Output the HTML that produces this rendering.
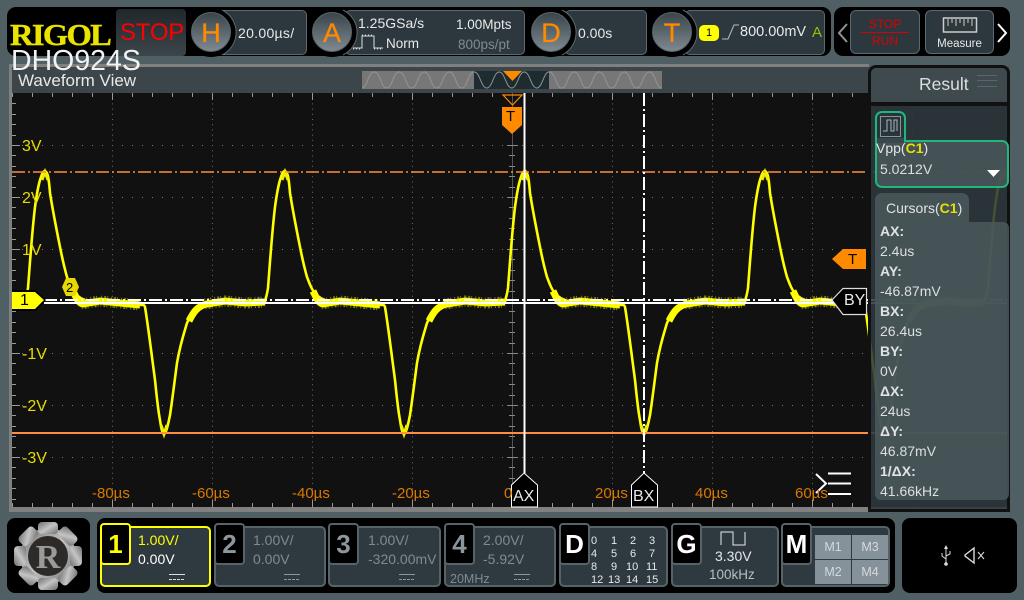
<!DOCTYPE html>
<html><head><meta charset="utf-8"><style>
html,body{margin:0;padding:0;background:#4f5f64;}
#r{position:relative;width:1024px;height:600px;overflow:hidden;background:#4f5f64;font-family:"Liberation Sans",sans-serif;color:#e8e8e8;}
#r div{position:absolute;box-sizing:border-box;white-space:nowrap;}
.bk{background:#000;}
.box{background:#2c383e;border:1px solid #5b6a70;border-radius:5px;}
.ring{background:#000;border-radius:50%;width:50px;height:50px;top:7px;}
.cir{border-radius:50%;width:40px;height:40px;top:12px;background:linear-gradient(#3a454b,#7e8a90);color:#ff8a00;font-size:27px;text-align:center;line-height:40px;border:1px solid #59666c;-webkit-text-stroke:.3px #ff8a00;}
.t{line-height:1;}
.ch{background:#2e3a40;border:2px solid #56646a;border-radius:5px;height:61px;top:526px;}
.tab{background:#000;border:2px solid #56646a;border-radius:4px;width:31px;height:42px;top:523px;font-weight:bold;font-size:26px;text-align:center;line-height:38px;color:#8b979c;}
.g{color:#7f8b90;}
.gl{background:#86929a;color:#d5d9db;font-size:12.5px;text-align:center;line-height:24px;width:36px;height:24px;}
.d{font-size:11px;color:#e8e8e8;line-height:1;}
.lab{font-size:14px;font-weight:bold;color:#e0e3e4;left:880px;line-height:1;}
.val{font-size:14px;color:#dcdfe0;left:880px;line-height:1;}
</style></head><body><div id="r">

<!-- top bars -->
<div class="bk" style="left:7px;top:7px;width:824px;height:49px;border-radius:9px;"></div>
<div class="bk" style="left:834px;top:7px;width:176px;height:49px;border-radius:9px;"></div>
<div class="t" style="left:10px;top:19px;color:#eae300;font-family:'Liberation Serif',serif;font-weight:bold;font-size:31px;transform:scaleX(1.05);transform-origin:left;letter-spacing:-1.6px;-webkit-text-stroke:.4px #eae300;">RIGOL</div>
<div style="left:116px;top:9px;width:70px;height:47px;background:linear-gradient(#20272b,#3b464b);border-radius:4px;"></div>
<div class="t" style="left:120px;top:21px;color:#f00;font-size:24px;letter-spacing:-.2px;">STOP</div>

<div class="box" style="left:218px;top:10px;width:89px;height:45px;"></div>
<div class="ring" style="left:186px;"></div>
<div class="cir" style="left:191px;">H</div>
<div class="t" style="left:238px;top:26px;font-size:14px;letter-spacing:.3px;">20.00µs/</div>

<div class="box" style="left:345px;top:10px;width:180px;height:45px;"></div>
<div class="ring" style="left:307px;"></div>
<div class="cir" style="left:312px;">A</div>
<div class="t" style="left:358px;top:16px;font-size:14px;">1.25GSa/s</div>
<div class="t" style="left:456px;top:18px;font-size:13.5px;">1.00Mpts</div>
<div class="t" style="left:458px;top:38px;font-size:13.5px;color:#7f8b90;">800ps/pt</div>
<div class="t" style="left:386px;top:37px;font-size:13.5px;">Norm</div>
<svg style="position:absolute;left:352px;top:33px" width="32" height="18"><path d="M1 15H10V3H22V15H31" fill="none" stroke="#ddd" stroke-width="1"/><path d="M1 16H10M22 16H31M10 2H22" stroke="#ddd" stroke-width="1" stroke-dasharray="1 2" fill="none"/></svg>

<div class="box" style="left:565px;top:10px;width:82px;height:45px;"></div>
<div class="ring" style="left:526px;"></div>
<div class="cir" style="left:531px;">D</div>
<div class="t" style="left:578px;top:26px;font-size:14px;">0.00s</div>

<div class="box" style="left:685px;top:10px;width:140px;height:45px;"></div>
<div class="ring" style="left:647px;"></div>
<div class="cir" style="left:652px;">T</div>
<svg style="position:absolute;left:0;top:0" width="1024" height="60"><g fill="none" stroke="#5b6a70"><path d="M222 10A25 25 0 0 1 222 55"/><path d="M343 10A25 25 0 0 1 343 55"/><path d="M562 10A25 25 0 0 1 562 55"/><path d="M683 10A25 25 0 0 1 683 55"/></g></svg>
<div style="left:699px;top:25px;width:20px;height:16px;background:#ff0;border-radius:5px;color:#000;font-size:11px;text-align:center;line-height:16px;">1</div>
<svg style="position:absolute;left:720px;top:23px" width="20" height="18"><path d="M2 16H8L14 2H19" fill="none" stroke="#bbb" stroke-width="1"/></svg>
<div class="t" style="left:740px;top:25px;font-size:14.5px;">800.00mV</div>
<div class="t" style="left:812px;top:25px;font-size:15px;color:#8fc400;">A</div>

<svg style="position:absolute;left:836px;top:20px" width="14" height="24"><path d="M11 4L3 13L11 22" fill="none" stroke="#8a9499" stroke-width="2"/></svg>
<div class="box" style="left:850px;top:10px;width:70px;height:44px;border-radius:6px;"></div>
<div class="t" style="left:850px;top:18px;width:70px;text-align:center;font-size:12px;color:#d00;">STOP</div>
<div style="left:861px;top:32px;width:48px;height:1px;background:#d00;"></div>
<div class="t" style="left:850px;top:35px;width:70px;text-align:center;font-size:12px;color:#d00;">RUN</div>
<div class="box" style="left:925px;top:10px;width:69px;height:44px;border-radius:6px;"></div>
<svg style="position:absolute;left:942px;top:16px" width="36" height="18"><rect x="1.5" y="2" width="33" height="14" fill="none" stroke="#ccc" stroke-width="1.5"/><path d="M6 3V10M10 3V7M14 3V10M18 3V7M22 3V10M26 3V7M30 3V10" stroke="#ccc" stroke-width="1"/></svg>
<div class="t" style="left:925px;top:39px;width:69px;text-align:center;font-size:11.5px;">Measure</div>
<svg style="position:absolute;left:995px;top:20px" width="14" height="24"><path d="M3 4L11 13L3 22" fill="none" stroke="#fff" stroke-width="2"/></svg>

<!-- waveform area -->
<div style="left:9px;top:64px;width:860px;height:3px;background:#808080;"></div>
<div style="left:9px;top:67px;width:1000px;height:26px;background:#3c4549;"></div>
<div style="left:9px;top:64px;width:3px;height:448px;background:#808080;"></div>
<div style="left:12px;top:93px;width:996px;height:414px;background:#111;"></div>
<div style="left:9px;top:507px;width:1000px;height:5px;background:#808080;"></div>

<svg style="position:absolute;left:0;top:0" width="1024" height="600">
<defs>
<clipPath id="pl"><rect x="12" y="93" width="996" height="414"/></clipPath>
<pattern id="sg" patternUnits="userSpaceOnUse" x="361.7" y="71" width="25" height="18"><path d="M0 17C6 17 6 1 12.5 1S19 17 25 17" fill="none" stroke="#949494" stroke-width="1"/></pattern>
<g id="per">
 <path d="M-20 302C-19 297 -18 295 -17 288C-15 262 -13 232 -10 207C-8 192 -7 187 -5 180C-3 174 -2 171 0 171C3 172 4 180 5 193C8 212 12 232 15 247C18 262 20 270 22 277C25 285 27 290 30 293C33 297 38 300 45 302" fill="none" stroke="#ff0" stroke-width="2.6"/>
 <path d="M-3 180L0 172L3 180" fill="none" stroke="#ee0" stroke-width="3"/>
 <path d="M28 291C31 297 33 303 38 304L55 301L75 303L95 305" fill="none" stroke="#ff0" stroke-width="7"/>
 <path d="M36 304L55 301L75 303L95 305" fill="none" stroke="#ee0" stroke-width="11" stroke-dasharray="1 2 2 1 1 3" opacity=".5"/>
 <path d="M95 305C98 305 99 304 100 307C103 325 106 350 110 380C112 400 113 410 115 420C116 427 117 433 119 434C121 434 123 425 125 415C127 402 130 378 132 363C135 345 139 333 142 323C145 316 148 313 150 310C153 307 156 305 160 304" fill="none" stroke="#ff0" stroke-width="2.6"/>
 <path d="M116 425L119 434L122 425" fill="none" stroke="#ee0" stroke-width="3"/>
 <path d="M144 321C148 313 152 306 162 304L180 301L200 303L220 302" fill="none" stroke="#ff0" stroke-width="7"/>
 <path d="M160 304L180 301L200 303L220 302" fill="none" stroke="#ee0" stroke-width="11" stroke-dasharray="1 2 2 1 1 3" opacity=".5"/>
</g>
</defs>
<rect x="362" y="71" width="300" height="18" fill="#777"/>
<rect x="362" y="71" width="300" height="18" fill="url(#sg)"/>
<rect x="474" y="71" width="75" height="18" fill="#1f2c2f"/>
<path d="M474.2 72C480 72 481 88 486.7 88C492.5 88 493.5 72 499.2 72C505 72 506 88 511.7 88C517.5 88 518.5 72 524.2 72C530 72 531 88 536.7 88C542.5 88 543.5 72 549 72" fill="none" stroke="#8a9599" stroke-width="1"/>
<polygon points="503,71 522,71 512.5,81" fill="#ff8a00"/>

<!-- dotted grid -->
<g stroke="#7a7a7a" stroke-width="1" fill="none">
 <path d="M12 145.5H1008M12 197.5H1008M12 249.5H1008M12 353.5H1008M12 405.5H1008M12 457.5H1008" stroke-dasharray="1 9"/>
 <path d="M112.5 93V507M212.5 93V507M312.5 93V507M412.5 93V507M612.5 93V507M712.5 93V507M812.5 93V507M912.5 93V507" stroke-dasharray="1 4.2" stroke="#6c6c6c"/>
 <!-- top ticks -->
 <path stroke="#999" d="M12.5 93v4M32.5 93v4M52.5 93v4M72.5 93v4M92.5 93v4M112.5 93v7M132.5 93v4M152.5 93v4M172.5 93v4M192.5 93v4M212.5 93v7M232.5 93v4M252.5 93v4M272.5 93v4M292.5 93v4M312.5 93v7M332.5 93v4M352.5 93v4M372.5 93v4M392.5 93v4M412.5 93v7M432.5 93v4M452.5 93v4M472.5 93v4M492.5 93v4M512.5 93v7M532.5 93v4M552.5 93v4M572.5 93v4M592.5 93v4M612.5 93v7M632.5 93v4M652.5 93v4M672.5 93v4M692.5 93v4M712.5 93v7M732.5 93v4M752.5 93v4M772.5 93v4M792.5 93v4M812.5 93v7M832.5 93v4M852.5 93v4"/>
 <!-- bottom ticks -->
 <path stroke="#999" d="M12.5 507v-4M32.5 507v-4M52.5 507v-4M72.5 507v-4M92.5 507v-4M112.5 507v-7M132.5 507v-4M152.5 507v-4M172.5 507v-4M192.5 507v-4M212.5 507v-7M232.5 507v-4M252.5 507v-4M272.5 507v-4M292.5 507v-4M312.5 507v-7M332.5 507v-4M352.5 507v-4M372.5 507v-4M392.5 507v-4M412.5 507v-7M432.5 507v-4M452.5 507v-4M472.5 507v-4M492.5 507v-4M512.5 507v-7M532.5 507v-4M552.5 507v-4M572.5 507v-4M592.5 507v-4M612.5 507v-7M632.5 507v-4M652.5 507v-4M672.5 507v-4M692.5 507v-4M712.5 507v-7M732.5 507v-4M752.5 507v-4M772.5 507v-4M792.5 507v-4M812.5 507v-7M832.5 507v-4M852.5 507v-4"/>
 <!-- left ticks -->
 <path stroke="#999" d="M12 103.5h4M12 114.5h4M12 124.5h4M12 135.5h4M12 145.5h8M12 155.5h4M12 166.5h4M12 176.5h4M12 187.5h4M12 197.5h8M12 207.5h4M12 218.5h4M12 228.5h4M12 239.5h4M12 249.5h8M12 259.5h4M12 270.5h4M12 280.5h4M12 291.5h4M12 311.5h4M12 322.5h4M12 332.5h4M12 343.5h4M12 353.5h8M12 363.5h4M12 374.5h4M12 384.5h4M12 395.5h4M12 405.5h8M12 415.5h4M12 426.5h4M12 436.5h4M12 447.5h4M12 457.5h8M12 467.5h4M12 478.5h4M12 488.5h4M12 499.5h4"/>
 <!-- center axis -->
 <path d="M512.5 93V507" stroke="#555"/>
 <path stroke="#888" d="M507 145.5h11M509 155.5h6M509 166.5h6M509 176.5h6M509 187.5h6M507 197.5h11M509 207.5h6M509 218.5h6M509 228.5h6M509 239.5h6M507 249.5h11M509 259.5h6M509 270.5h6M509 280.5h6M509 291.5h6M509 311.5h6M509 322.5h6M509 332.5h6M509 343.5h6M507 353.5h11M509 363.5h6M509 374.5h6M509 384.5h6M509 395.5h6M507 405.5h11M509 415.5h6M509 426.5h6M509 436.5h6M509 447.5h6M507 457.5h11M509 467.5h6M509 478.5h6M509 488.5h6"/>
</g>

<!-- trace -->
<g clip-path="url(#pl)">
<use href="#per" x="45"/>
<use href="#per" x="285"/>
<use href="#per" x="525"/>
<use href="#per" x="765"/>
<use href="#per" x="1005"/>
</g>

<!-- cursors -->
<path d="M12 172H1008" stroke="#ff8c42" stroke-width="1.5" stroke-dasharray="13 3 2 3"/>
<path d="M12 433H1008" stroke="#ff8c42" stroke-width="2"/>
<path d="M44 300H1008" stroke="#fff" stroke-width="2" stroke-dasharray="13 3 2 3"/>
<path d="M44 303H1008" stroke="#fff" stroke-width="2"/>
<path d="M524.5 93V475" stroke="#fff" stroke-width="2"/>
<path d="M644 93V475" stroke="#fff" stroke-width="2" stroke-dasharray="13 3 2 3"/>

<!-- markers -->
<polygon points="503,95 522,95 512.5,105" fill="none" stroke="#ff8a00" stroke-width="1.2"/>
<polygon points="502,107 522,107 522,125 512,134 502,125" fill="#ff8a00"/>
<polygon points="866,249 866,269 843,269 832,259 843,249" fill="#ff8a00"/>
<polygon points="12,290 36,290 46,300 36,311 12,311" fill="#000"/>
<polygon points="12,292 35,292 44,300 35,309 12,309" fill="#ff0"/>
<polygon points="66,278 75,278 79,287 75,296 66,296 62,287" fill="#e6d800"/>
<polygon points="511.5,507 511.5,485 524,473 537.5,485 537.5,507" fill="#000" stroke="#fff" stroke-width="1"/>
<polygon points="631.5,507 631.5,485 644,473 657.5,485 657.5,507" fill="#000" stroke="#fff" stroke-width="1"/>
<polygon points="866.5,288.5 843,288.5 832,300 843,314.5 866.5,314.5" fill="#000" stroke="#ddd" stroke-width="1.2"/>
<path d="M828 473.5H851M828 483.5H851M828 494H851" stroke="#fff" stroke-width="2"/>
<path d="M816 474L826 483.5L816 493" fill="none" stroke="#fff" stroke-width="2"/>
</svg>

<!-- markers text -->
<div class="t" style="left:506px;top:109px;font-size:15px;color:#000;">T</div>
<div class="t" style="left:848px;top:252px;font-size:15px;color:#000;">T</div>
<div class="t" style="left:20px;top:293px;font-size:16px;color:#000;">1</div>
<div class="t" style="left:66px;top:281px;font-size:13px;color:#000;">2</div>
<div class="t" style="left:513px;top:489px;font-size:16px;">AX</div>
<div class="t" style="left:633px;top:489px;font-size:16px;">BX</div>
<div class="t" style="left:844px;top:293px;font-size:16px;">BY</div>

<!-- y labels -->
<div class="t" style="left:22px;top:139px;font-size:16px;color:#e6dc00;">3V</div>
<div class="t" style="left:22px;top:191px;font-size:16px;color:#e6dc00;">2V</div>
<div class="t" style="left:22px;top:243px;font-size:16px;color:#e6dc00;">1V</div>
<div class="t" style="left:22px;top:347px;font-size:16px;color:#e6dc00;">-1V</div>
<div class="t" style="left:22px;top:399px;font-size:16px;color:#e6dc00;">-2V</div>
<div class="t" style="left:22px;top:451px;font-size:16px;color:#e6dc00;">-3V</div>
<!-- x labels -->
<div class="t" style="left:92px;top:486px;font-size:15px;color:#d97a00;">-80µs</div>
<div class="t" style="left:192px;top:486px;font-size:15px;color:#d97a00;">-60µs</div>
<div class="t" style="left:292px;top:486px;font-size:15px;color:#d97a00;">-40µs</div>
<div class="t" style="left:392px;top:486px;font-size:15px;color:#d97a00;">-20µs</div>
<div class="t" style="left:504px;top:486px;font-size:15px;color:#d97a00;">0</div>
<div class="t" style="left:595px;top:486px;font-size:15px;color:#d97a00;">20µs</div>
<div class="t" style="left:695px;top:486px;font-size:15px;color:#d97a00;">40µs</div>
<div class="t" style="left:795px;top:486px;font-size:15px;color:#d97a00;">60µs</div>

<div class="t" style="left:11px;top:47px;font-size:28.5px;color:#f2f2f2;">DHO924S</div>
<div class="t" style="left:18px;top:72px;font-size:17px;color:#e8e8e8;">Waveform View</div>

<!-- result panel -->
<div style="left:868px;top:65px;width:142px;height:447px;border:3px solid #111;border-radius:8px 8px 0 0;background:rgba(44,56,62,.88);"></div>
<div style="left:871px;top:68px;width:136px;height:34px;background:#3e4a4e;border-radius:5px 5px 0 0;"></div>
<div style="left:871px;top:102px;width:136px;height:4px;background:#111;"></div>
<div class="t" style="left:919px;top:76px;font-size:17.5px;color:#dcdfe0;">Result</div>
<div style="left:977px;top:75px;width:20px;height:1px;background:#59666b;"></div>
<div style="left:977px;top:80px;width:20px;height:1px;background:#59666b;"></div>
<div style="left:977px;top:86px;width:20px;height:1px;background:#59666b;"></div>

<div style="left:875px;top:111px;width:31px;height:32px;border:2px solid #1fb77a;border-bottom:none;border-radius:7px 7px 0 0;background:rgba(42,54,60,.5);"></div>
<div style="left:875px;top:140px;width:134px;height:48px;border:2px solid #1fb77a;border-radius:0 7px 7px 7px;background:rgba(74,88,92,.82);"></div>
<div style="left:877px;top:138px;width:27px;height:5px;background:#3a474c;"></div>
<svg style="position:absolute;left:880px;top:116px" width="21" height="21"><rect x=".5" y=".5" width="20" height="20" fill="none" stroke="#8a9599"/><path d="M3 15H7V4H11V15H14V4H17V15" fill="none" stroke="#aab3b6" stroke-width="1"/></svg>
<div class="t" style="left:876px;top:141px;font-size:14px;color:#e5e7e8;">Vpp(<span style="color:#e6e000;font-weight:bold;">C1</span>)</div>
<div class="t" style="left:880px;top:162px;font-size:14px;color:#dcdfe0;">5.0212V</div>
<svg style="position:absolute;left:986px;top:169px" width="15" height="9"><polygon points="1,1 14,1 7.5,8" fill="#fff"/></svg>

<div style="left:875px;top:193px;width:94px;height:29px;background:rgba(76,90,94,.82);border-radius:7px 7px 0 0;"></div>
<div style="left:875px;top:222px;width:134px;height:278px;background:rgba(76,90,94,.82);border-radius:0 6px 6px 6px;"></div>
<div class="t" style="left:886px;top:201px;font-size:14px;color:#e0e3e4;">Cursors(<span style="color:#e6e000;font-weight:bold;">C1</span>)</div>
<div class="lab" style="top:224px;">AX:</div>
<div class="val" style="top:244px;">2.4us</div>
<div class="lab" style="top:264px;">AY:</div>
<div class="val" style="top:284px;">-46.87mV</div>
<div class="lab" style="top:304px;">BX:</div>
<div class="val" style="top:324px;">26.4us</div>
<div class="lab" style="top:344px;">BY:</div>
<div class="val" style="top:364px;">0V</div>
<div class="lab" style="top:384px;">ΔX:</div>
<div class="val" style="top:404px;">24us</div>
<div class="lab" style="top:424px;">ΔY:</div>
<div class="val" style="top:444px;">46.87mV</div>
<div class="lab" style="top:464px;">1/ΔX:</div>
<div class="val" style="top:484px;">41.66kHz</div>

<!-- bottom -->
<div class="bk" style="left:7px;top:518px;width:83px;height:75px;border-radius:8px;"></div>
<svg style="position:absolute;left:10px;top:519px" width="76" height="74">
<defs><linearGradient id="gm" x1="0" y1="0" x2="1" y2="1"><stop offset="0" stop-color="#6e6e6e"/><stop offset=".5" stop-color="#c4c4c4"/><stop offset="1" stop-color="#6e6e6e"/></linearGradient></defs>
<g transform="translate(38,37)" fill="url(#gm)">
<circle r="28"/>
<rect x="-10" y="-34" width="20" height="12" rx="4"/>
<rect x="-10" y="-34" width="20" height="12" rx="4" transform="rotate(45)"/>
<rect x="-10" y="-34" width="20" height="12" rx="4" transform="rotate(90)"/>
<rect x="-10" y="-34" width="20" height="12" rx="4" transform="rotate(135)"/>
<rect x="-10" y="-34" width="20" height="12" rx="4" transform="rotate(180)"/>
<rect x="-10" y="-34" width="20" height="12" rx="4" transform="rotate(225)"/>
<rect x="-10" y="-34" width="20" height="12" rx="4" transform="rotate(270)"/>
<rect x="-10" y="-34" width="20" height="12" rx="4" transform="rotate(315)"/>
<circle r="20" fill="#2e2a28"/>
</g>
<text x="38" y="49" text-anchor="middle" font-family="Liberation Serif" font-weight="bold" font-size="34" fill="#9a9a9a">R</text>
</svg>

<div class="bk" style="left:97px;top:518px;width:798px;height:75px;border-radius:8px;"></div>

<div class="ch" style="left:100px;width:111px;border-color:#ff0;border-width:2px;"></div>
<div class="tab" style="left:100px;border-color:#ff0;color:#ff0;">1</div>
<div class="t" style="left:138px;top:533px;font-size:14px;color:#ff0;">1.00V/</div>
<div class="t" style="left:138px;top:552px;font-size:14px;color:#fff;">0.00V</div>
<svg style="position:absolute;left:168px;top:573px" width="18" height="9"><path d="M1 1.5H17" stroke="#ddd"/><path d="M1 6.5H17" stroke="#ddd" stroke-dasharray="3 1"/></svg>

<div class="ch" style="left:214px;width:112px;"></div>
<div class="tab" style="left:214px;">2</div>
<div class="t g" style="left:253px;top:533px;font-size:14px;">1.00V/</div>
<div class="t g" style="left:253px;top:552px;font-size:14px;">0.00V</div>
<svg style="position:absolute;left:283px;top:573px" width="18" height="9"><path d="M1 1.5H17" stroke="#8b979c"/><path d="M1 6.5H17" stroke="#8b979c" stroke-dasharray="3 1"/></svg>

<div class="ch" style="left:328px;width:113px;"></div>
<div class="tab" style="left:328px;">3</div>
<div class="t g" style="left:368px;top:533px;font-size:14px;">1.00V/</div>
<div class="t g" style="left:368px;top:552px;font-size:14px;">-320.00mV</div>
<svg style="position:absolute;left:398px;top:573px" width="18" height="9"><path d="M1 1.5H17" stroke="#8b979c"/><path d="M1 6.5H17" stroke="#8b979c" stroke-dasharray="3 1"/></svg>

<div class="ch" style="left:444px;width:112px;"></div>
<div class="tab" style="left:444px;">4</div>
<div class="t g" style="left:483px;top:533px;font-size:14px;">2.00V/</div>
<div class="t g" style="left:483px;top:552px;font-size:14px;">-5.92V</div>
<div class="t g" style="left:450px;top:573px;font-size:12.5px;">20MHz</div>
<svg style="position:absolute;left:513px;top:573px" width="18" height="9"><path d="M1 1.5H17" stroke="#8b979c"/><path d="M1 6.5H17" stroke="#8b979c" stroke-dasharray="3 1"/></svg>

<div class="ch" style="left:559px;width:109px;"></div>
<div class="tab" style="left:559px;color:#fff;">D</div>
<div class="d" style="left:591px;top:536px;">0</div><div class="d" style="left:611px;top:536px;">1</div><div class="d" style="left:630px;top:536px;">2</div><div class="d" style="left:649px;top:536px;">3</div>
<div class="d" style="left:591px;top:549px;">4</div><div class="d" style="left:611px;top:549px;">5</div><div class="d" style="left:630px;top:549px;">6</div><div class="d" style="left:649px;top:549px;">7</div>
<div class="d" style="left:591px;top:562px;">8</div><div class="d" style="left:611px;top:562px;">9</div><div class="d" style="left:626px;top:562px;">10</div><div class="d" style="left:646px;top:562px;">11</div>
<div class="d" style="left:591px;top:575px;">12</div><div class="d" style="left:608px;top:575px;">13</div><div class="d" style="left:626px;top:575px;">14</div><div class="d" style="left:646px;top:575px;">15</div>

<div class="ch" style="left:671px;width:108px;"></div>
<div class="tab" style="left:671px;color:#fff;">G</div>
<svg style="position:absolute;left:720px;top:531px" width="28" height="15"><path d="M1 14V1H13V14H25V1" fill="none" stroke="#e8e8e8" stroke-width="1"/></svg>
<div class="t" style="left:715px;top:549px;font-size:14px;">3.30V</div>
<div class="t" style="left:709px;top:568px;font-size:13.5px;color:#b8bfc2;">100kHz</div>

<div class="ch" style="left:781px;width:109px;"></div>
<div class="tab" style="left:781px;color:#fff;">M</div>
<div class="gl" style="left:815px;top:535px;">M1</div>
<div class="gl" style="left:852px;top:535px;">M3</div>
<div class="gl" style="left:815px;top:560px;">M2</div>
<div class="gl" style="left:852px;top:560px;">M4</div>

<div class="bk" style="left:902px;top:518px;width:115px;height:75px;border-radius:8px;"></div>
<svg style="position:absolute;left:938px;top:544px" width="50" height="24">
<path d="M8 2V20" stroke="#ddd" stroke-width="1"/><path d="M6 5L8 1L10 5Z" fill="#ddd"/><circle cx="8" cy="20" r="1.8" fill="#ddd"/><path d="M8 15L4 12V9M8 12L12 10V7" fill="none" stroke="#ddd"/>
<path d="M27 11L36 4V19L27 12Z" fill="none" stroke="#ddd" stroke-width="1.4"/><path d="M40 8L46 15M46 8L40 15" stroke="#ddd"/>
</svg>

</div></body></html>
